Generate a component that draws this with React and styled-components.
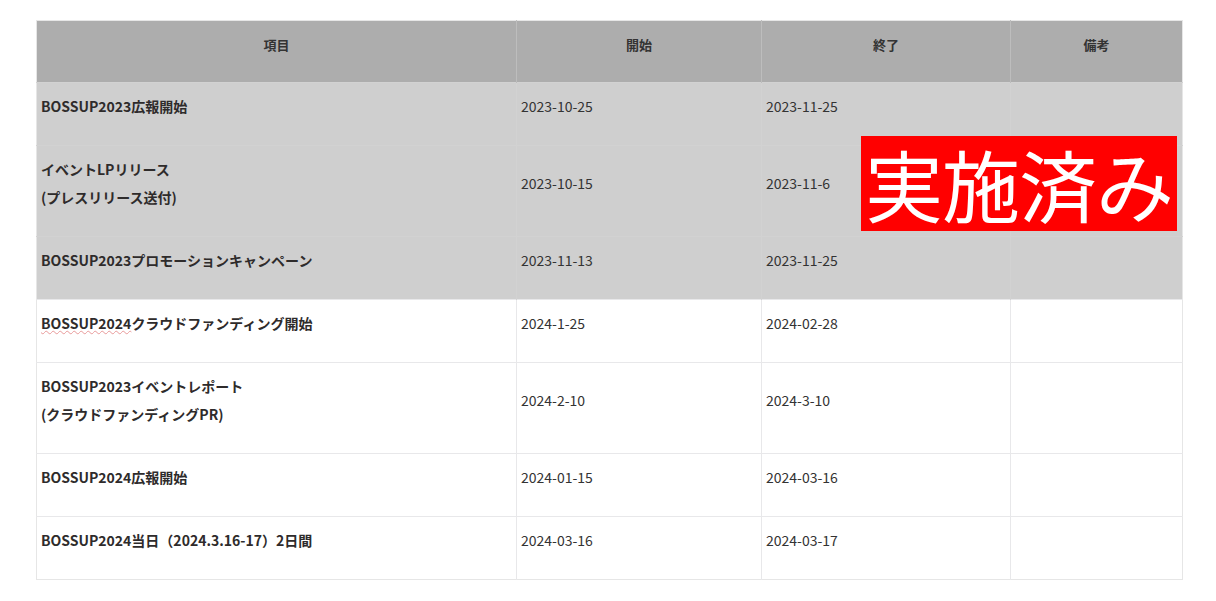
import React from 'react'
import styled, { createGlobalStyle } from 'styled-components'

const GlobalStyle = createGlobalStyle`
  body {
    margin: 0;
    background: #fff;
    font-family: "Noto Sans CJK JP", "Noto Sans", sans-serif;
    color: #333;
  }
`

const rows = [
  { title: ['BOSSUP2023広報開始'], start: '2023-10-25', end: '2023-11-25', done: true },
  { title: ['イベントLPリリース', '(プレスリリース送付)'], start: '2023-10-15', end: '2023-11-6', done: true, stamp: true },
  { title: ['BOSSUP2023プロモーションキャンペーン'], start: '2023-11-13', end: '2023-11-25', done: true },
  { title: ['BOSSUP2024クラウドファンディング開始'], start: '2024-1-25', end: '2024-02-28', squiggle: 'BOSSUP2024' },
  { title: ['BOSSUP2023イベントレポート', '(クラウドファンディングPR)'], start: '2024-2-10', end: '2024-3-10' },
  { title: ['BOSSUP2024広報開始'], start: '2024-01-15', end: '2024-03-16' },
  { title: ['BOSSUP2024当日（2024.3.16-17）2日間'], start: '2024-03-16', end: '2024-03-17' },
]

const Schedule = () => {
  return (
    <Page>
      <GlobalStyle />
      <Table>
        <colgroup>
          <col style={{ width: 480 }} />
          <col style={{ width: 245 }} />
          <col style={{ width: 249 }} />
          <col style={{ width: 172 }} />
        </colgroup>
        <thead>
          <tr>
            <HeadCell>項目</HeadCell>
            <HeadCell>開始</HeadCell>
            <HeadCell>終了</HeadCell>
            <HeadCell>備考</HeadCell>
          </tr>
        </thead>
        <tbody>
          {rows.map((row, i) => (
            <Row key={i} $done={row.done}>
              <TitleCell>
                {row.title.map((line, j) => (
                  <Line key={j}>
                    {row.squiggle && j === 0 ? (
                      <>
                        <Squiggle>{row.squiggle}</Squiggle>
                        {line.slice(row.squiggle.length)}
                      </>
                    ) : (
                      line
                    )}
                  </Line>
                ))}
              </TitleCell>
              <DateCell>{row.start}</DateCell>
              <DateCell>{row.end}</DateCell>
              <NoteCell>
                {row.stamp && <Stamp>実施済み</Stamp>}
              </NoteCell>
            </Row>
          ))}
        </tbody>
      </Table>
    </Page>
  )
}

const Page = styled.div`
  padding: 20px 34px 22px 36px;
`

const Table = styled.table`
  width: 1146px;
  table-layout: fixed;
  border-collapse: collapse;
  border: 1px solid #e6e6e6;
  font-size: 14px;
  line-height: 28px;
`

const HeadCell = styled.th`
  background: #adadad;
  color: #333;
  font-weight: 700;
  font-size: 13px;
  text-align: center;
  vertical-align: top;
  padding: 10px 4px 23px;
  border-left: 1px solid #bdbdbd;
  &:first-child {
    border-left: none;
  }
`

const Row = styled.tr`
  background: ${p => (p.$done ? '#cfcfcf' : '#fff')};
  border-top: 1px solid ${p => (p.$done ? '#d2d2d2' : '#e8e8ea')};
  & > td {
    border-left: 1px solid ${p => (p.$done ? '#d2d2d2' : '#e8e8ea')};
  }
  & > td:first-child {
    border-left: none;
  }
`

const Cell = styled.td`
  padding: 9px 4px 25px;
  vertical-align: middle;
  text-align: left;
`

const TitleCell = styled(Cell)`
  font-weight: 700;
  color: #2e2b2b;
`

const DateCell = styled(Cell)`
  font-weight: 400;
  color: #333;
`

const NoteCell = styled(Cell)`
  position: relative;
`

const Line = styled.div`
  white-space: nowrap;
`

const Squiggle = styled.span`
  text-decoration: underline wavy #e89a9a;
  text-decoration-thickness: 1px;
  text-underline-offset: 1px;
`

const Stamp = styled.div`
  position: absolute;
  top: -10px;
  right: 5px;
  width: 316px;
  height: 95px;
  background: #ff0000;
  color: #fff;
  font-size: 78px;
  font-weight: 400;
  line-height: 95px;
  text-align: center;
  white-space: nowrap;
  letter-spacing: -1px;
`

export default Schedule
